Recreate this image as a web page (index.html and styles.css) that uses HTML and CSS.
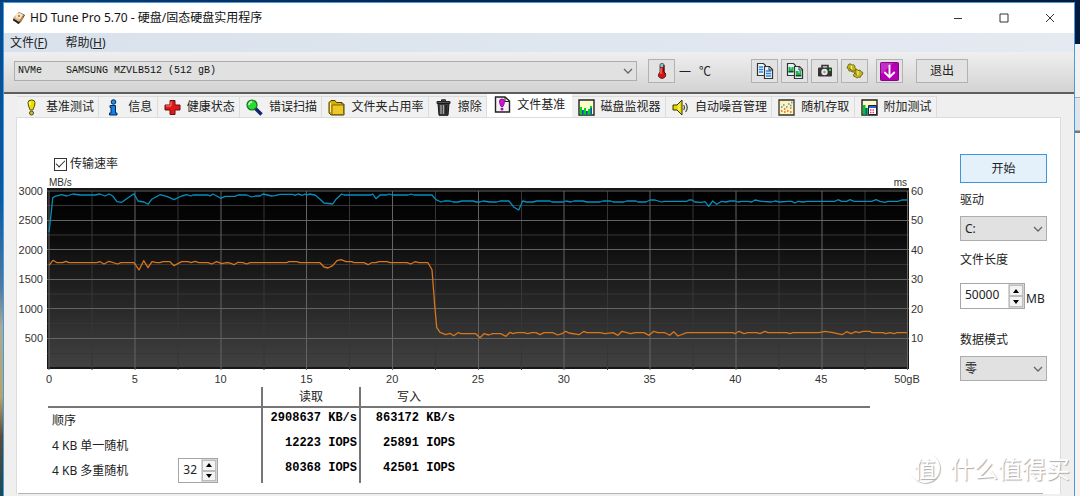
FILE: index.html
```html
<!DOCTYPE html>
<html lang="zh-CN">
<head>
<meta charset="utf-8">
<title>HD Tune Pro 5.70</title>
<link rel="stylesheet" href="styles.css">
</head>
<body>
<div class="desktop">
<div class="window">
  <header class="titlebar">
    <svg class="app-icon" viewBox="0 0 14 14" aria-hidden="true"><path d="M1 8 7 1l6 3-5 8-2 1z" fill="#3c342d"/><path d="M1 7 7 1l5 3-5 7z" fill="#d8b98a"/><ellipse cx="7" cy="5" rx="3.4" ry="2.8" fill="#f6e6c6"/><circle cx="7" cy="5" r="1" fill="#a06a2c"/><path d="m1 8 6 3v2L1 9.500z" fill="#222"/><path d="m10 5 2 1-3 5-1-1z" fill="#b97e38"/></svg>
    <h1 class="title">HD Tune Pro 5.70 - 硬盘/固态硬盘实用程序</h1>
    <div class="caption-buttons">
      <button class="caption-button" aria-label="最小化"><svg viewBox="0 0 10 10"><path d="M1 5.500h8"/></svg></button>
      <button class="caption-button" aria-label="最大化"><svg viewBox="0 0 10 10"><path d="M1 1h8v8H1z"/></svg></button>
      <button class="caption-button" aria-label="关闭"><svg viewBox="0 0 10 10"><path d="m1 1 8 8M9 1 1 9"/></svg></button>
    </div>
  </header>
  <nav class="menubar">
    <button class="menu">文件(<u>F</u>)</button>
    <button class="menu">帮助(<u>H</u>)</button>
  </nav>
  <div class="toolbar">
    <div class="combo combo-drive">
      <select class="combo-field mono" aria-label="硬盘"><option>NVMe&nbsp;&nbsp;&nbsp; SAMSUNG MZVLB512 (512 gB)</option></select>
      <svg class="chevron" viewBox="0 0 10 6" aria-hidden="true"><path d="m1 1 4 4 4-4"/></svg>
    </div>
    <div class="temperature">
      <button class="tool" aria-label="温度"><svg viewBox="0 0 18 18"><path d="M7 2.500Q9 0 11 2.500V10q2.500 2 1.500 4.500Q9 18.500 5.500 14.500 5 12 7 10z" fill="#e01010" stroke="#222" stroke-width=".8"/><path d="M7.400 2.500Q9 .6 10.600 2.500V5H7.400z" fill="#5fd4dc"/><path d="M8 6v6" stroke="#ff9a8a"/><path d="M11 3v7l2 2" stroke="#550000" fill="none"/></svg></button>
      <span class="dash">—</span><span class="degree">℃</span>
    </div>
    <div class="tools">
      <button class="tool" aria-label="复制文本"><svg viewBox="0 0 18 18"><g fill="#eef6ff" stroke="#333" stroke-width="1.200"><path d="M1.500 1.500h6l2 2v10h-8z"/><path d="M8.500 4.500h5l3 3v9h-8z"/></g><path d="M3 5h4M3 7.500h4M3 10h4M10 9h5M10 11.500h5M10 14h5" stroke="#2a86d8" stroke-width="1.300"/><path d="M13 4.500V8h3.500" fill="none" stroke="#333"/></svg></button>
      <button class="tool" aria-label="复制图像"><svg viewBox="0 0 18 18"><g fill="#e6f2f2" stroke="#333" stroke-width="1.200"><path d="M1.500 1.500h6l2 2v10h-8z"/><path d="M8.500 4.500h5l3 3v9h-8z"/></g><path d="M2.500 5h5v5h-5zM9.800 9h5.500v5H9.800z" fill="#20b830"/><path d="M2.500 9h5v1.500h-5zM9.800 13h5.500v1.500H9.800z" fill="#153c4a"/><path d="M4 5h2v2H4zM12 9h2v2h-2z" fill="#57c9e4"/><path d="M13 4.500V8h3.500" fill="none" stroke="#333"/></svg></button>
      <button class="tool" aria-label="截图"><svg viewBox="0 0 18 18"><path d="M6 6V3.500h6V6" fill="none" stroke="#333" stroke-width="1.600"/><rect x="2" y="5.500" width="14" height="9" rx="1" fill="#343434"/><circle cx="8.500" cy="10" r="3.200" fill="#e6e6e6"/><circle cx="8.500" cy="10" r="1.200" fill="#999"/><rect x="13" y="7" width="2" height="2" fill="#29dc35"/></svg></button>
      <button class="tool" aria-label="选项"><svg viewBox="0 0 18 18"><g fill="#c4b51c" stroke="#6d640c" stroke-width=".9"><path d="M3 2h2l.6 1.500 1.800-1L9 4.200 8.500 5.500 10 6.500l-.5 2.300H7.800L6.500 10 4.800 9H3L2.500 7.200 1 6l.8-2z"/><path d="m9 8 2-.7 1 1.200 2-.5 1 1.600 1.800.8-.3 2.200-1.500.8-.5 1.800h-2L11 16l-1.800-1.200-1.500-.6v-2L9 11z"/></g><path d="M5.500 3.500v4M12 9v4" stroke="#eee9a0" stroke-width="1.300"/><path d="m3 6 8 7" stroke="#786e10"/></svg></button>
      <button class="tool tool-save" aria-label="保存"><svg viewBox="0 0 20 20"><rect x=".5" y=".5" width="19" height="19" rx="1" fill="#b600b6" stroke="#7b007b"/><path d="M1 1h13L1 13z" fill="#d05bd6" opacity=".5"/><path d="M10 3v12M4.500 10.500 10 16l5.500-5.500" fill="none" stroke="#fff" stroke-width="2"/></svg></button>
      <button class="tool tool-exit">退出</button>
    </div>
  </div>
  <div class="tabs" role="tablist">
    <button class="tab" role="tab"><svg viewBox="0 0 17 17"><path d="M5 3.500Q5 1 8.500 1T12 3.500Q12 7 9.800 11H7.200Q5 7 5 3.500z" fill="#e8e000" stroke="#555200"/><circle cx="8.500" cy="14" r="2" fill="#d4c800" stroke="#444"/><path d="M7 3v3" stroke="#fffcb0" stroke-width="1.500"/></svg>基准测试</button>
    <button class="tab" role="tab"><svg viewBox="0 0 17 17"><circle cx="8.500" cy="3" r="2.300" fill="#1e8ef0" stroke="#052858"/><path d="M5 6.500h5.500V14H12v2H4.500v-2H6V8.500H5z" fill="#1083e8" stroke="#052858"/></svg>信息</button>
    <button class="tab" role="tab"><svg viewBox="0 0 17 17"><path d="M6 1.500h5V6h5v5h-5v4.500H6V11H1V6h5z" fill="#e01818" stroke="#681010"/><path d="M7 2.500V7H2" fill="none" stroke="#ff8c7c"/></svg>健康状态</button>
    <button class="tab" role="tab"><svg viewBox="0 0 17 17"><path d="m9 9 6.500 6.500" stroke="#16246e" stroke-width="3.400"/><circle cx="6" cy="6" r="5" fill="#28dc32" stroke="#14721c" stroke-width="1.200"/><path d="M3 6q0-3 3-3" fill="none" stroke="#d6ffda" stroke-width="1.500"/></svg>错误扫描</button>
    <button class="tab" role="tab"><svg viewBox="0 0 17 17"><path d="M1 3.500 3 1.500h4l1.500 2H14V5h2v11H3l-2-2z" fill="#d8b100" stroke="#4a3c00"/><path d="M4 6h11.500v9.500H4z" fill="#ebc928" stroke="#80690a"/><path d="M2.500 4v9" stroke="#fff0a0"/></svg>文件夹占用率</button>
    <button class="tab" role="tab"><svg viewBox="0 0 17 17"><path d="M6.500 2V.8h4V2M2 2.500h13v2H2z" fill="#555" stroke="#222"/><path d="M3 4.500h11l-1 11.800H4z" fill="#3a3a3a" stroke="#181818"/><path d="M6 6v9M8.500 6v9" stroke="#aaa" stroke-width="1.300"/><path d="M11 6v9" stroke="#111"/></svg>擦除</button>
    <button class="tab tab-active" role="tab" aria-selected="true"><svg viewBox="0 0 17 17"><path d="M1.500 1H11l4.500 4v11h-14z" fill="#f4f0f6" stroke="#222" stroke-width="1.400"/><path d="M11 1v4.500h4" fill="none" stroke="#222"/><path d="M5.500 5Q5.500 3 8 3t2.500 2Q10.500 8 9 10.500H7Q5.500 8 5.500 5z" fill="#d810d8" stroke="#6f086f" stroke-width=".8"/><circle cx="8" cy="13" r="1.500" fill="#b408b4"/></svg>文件基准</button>
    <button class="tab" role="tab"><svg viewBox="0 0 17 17"><path d="M1 1h15v15H1z" fill="#fbfbcb" stroke="#222" stroke-width="1.400"/><path d="M2 8h2v3h2V9h2v3h2v-2h2V7h2v8.500H2z" fill="#00d414"/><path d="M4 11h1.500v4.500H4zM8 12h1.500v3.500H8zM12.500 9H14v6.500h-1.500z" fill="#1741e0"/></svg>磁盘监视器</button>
    <button class="tab" role="tab"><svg viewBox="0 0 17 17"><path d="M1 6h4l5-5v15l-5-5H1z" fill="#e8da00" stroke="#373300"/><path d="M7 5v7" stroke="#fffa9b"/><path d="M11.500 6q2 2.500 0 5M13.500 4q3.500 4.500 0 9" fill="none" stroke="#444" stroke-width="1.200"/></svg>自动噪音管理</button>
    <button class="tab" role="tab"><svg viewBox="0 0 17 17"><path d="M1 1h15v15H1z" fill="#fbf4b4" stroke="#333" stroke-width="1.300"/><path d="M3 12h1.500M6 10h1.500M9 12h1.500M12 9h1.500M6 13h1.500M12 13h1.500" stroke="#e35a35" stroke-width="1.500"/><path d="M3 8h1.500M5 6h1.500M8 8h1.500M10 5h1.500M13 3.500h1.500M12 6.500h1.500" stroke="#6682df" stroke-width="1.500"/></svg>随机存取</button>
    <button class="tab" role="tab"><svg viewBox="0 0 17 17"><path d="M1 1h15v15H1z" fill="#fbfbcb" stroke="#222" stroke-width="1.400"/><path d="M2 6h2.500v3H7v6.500H2z" fill="#00c814"/><path d="M4.500 9H6v6.500H4.500z" fill="#1741e0"/><path d="M7.500 6.500h8v9h-8z" fill="#fff" stroke="#222"/><path d="M8 7h7v2H8z" fill="#2463d8"/><path d="M9 11h1.500M11.500 11H13M9 13.500h1.500M11.500 13.500H13" stroke="#e03c70" stroke-width="1.400"/></svg>附加测试</button>
  </div>
  <main class="panel">
    <div class="columns">
      <section class="results">
        <label class="check"><input class="check-box" type="checkbox" checked>传输速率</label>
        <div class="chart">
          <div class="units"><span>MB/s</span><span>ms</span></div>
          <div class="scale scale-left"><span>3000</span><span>2500</span><span>2000</span><span>1500</span><span>1000</span><span>500</span></div>
          <svg class="plot" viewBox="0 0 862 182" preserveAspectRatio="none" role="img" aria-label="传输速率">
            <defs><linearGradient id="shade" x1="0" y1="0" x2="0" y2="1"><stop offset="0" stop-color="#000"/><stop offset=".2" stop-color="#060606"/><stop offset="1" stop-color="#424242"/></linearGradient></defs>
            <rect width="862" height="181" fill="url(#shade)"/>
            <path class="frame" d="M0 1h862M0 180h862M.5 0v181M861.500 0v181"/>
            <path class="grid-minor" d="M0 17.500h862M0 47h862M0 76.500h862M0 106h862M0 135.500h862M0 165.500h862M45 3v179M131 3v179M217 3v179M302.500 3v179M388.500 3v179M474.500 3v179M560.500 3v179M646 3v179M732 3v179M818 3v179"/>
            <path class="grid-major" d="M0 3h862M0 32.500h862M0 61.500h862M0 91.500h862M0 120.500h862M0 150.500h862M2 3v179M88 3v179M174 3v179M259.500 3v179M345.500 3v179M431.500 3v179M517 3v179M603 3v179M689 3v179M775 3v179M860.500 3v179"/>
            <polyline class="series read" points="2,44 3.700,29 4.700,20 5.700,10 8,8.300 14.700,6.700 19.700,8 26,6 33,7 48,7 53,6 58,8 62,6 65.700,8 70,13.700 74.700,14.300 87,5.700 91,13 97,14 101,16.300 104.700,11.300 113,6.700 119.700,8.300 127,11.700 134.700,8 139.700,6.700 143.700,8 146,7 161,7 163,8 166,6 169.700,8 173.700,10.300 178,8.300 188,8.300 191,7 199.700,7 204.700,9 208,8 213,8 216,6 224.700,8 228,7.700 233,6.300 246,6.300 248,7.300 251,6 255.700,7.300 258,6 260,7.300 262,6 268,7 272,10.300 277,15 285.700,16 289,11.300 294.700,6 297,7 324,7 325.700,6 329,10.700 333,7 339.700,7 342,6 345,7 361,7 364,6 367,7 385,7 389,11.700 394,14 397,13 403,13 406,14 411,14 414.700,13 426,13 429.700,14 433,14 436,13 443,14 449.700,14 453,13 462,13 467,19.300 471.700,22 475.700,13 479.700,14 486,14 489.700,13 503,13 505,14 516,14 519,13 523.700,14 527,13 536,13 539.700,14 553,14 556,13 563.700,13 566,14 577,14 579.700,13 589,13 591,14 599,14 603,12 608,12 614.700,14 617,13.300 640,13.300 642,12 645,12 648,14 654.700,14.300 658,13.700 661.700,18.300 665.700,13 669.700,16.300 674.700,13.300 679,14 683,13 688,13 691,14 694.700,13.300 701,13.300 704.700,14 708,12 714.700,13.300 724.700,14 728,13 733,14 739.700,13.300 744.700,13.300 748,15 751,13.300 756,14 759.700,13.300 788,13.300 791,11.700 794.700,13.300 799.700,13.300 803,11.700 807,13.300 824.700,13.300 829,11.700 833,13.300 838,14.300 841,13.300 851,13.300 854.700,12 860,12"/>
            <polyline class="series write" points="2,77.300 6,72.300 10,74.700 15.700,74.700 19,73.300 22,74.700 49.700,74.700 53,73.700 57,76 62,73.300 70.700,76 73.700,74.700 87,74.700 92,82 96.700,72.700 101,79.700 105,73.700 109.700,74.700 113,74.700 116,73.700 123,73.700 127,77.700 134.700,73.700 141,73.700 144,74.700 148,73.300 152,74.700 161,74.700 164.700,76 169.700,73.700 174.700,75.700 179.700,74.700 183,75 187,76.700 191,74.300 196,74.700 199.700,76 203,74.700 239.700,74.700 242,73.700 249.700,73.700 253,74.700 273,74.700 277,79 281,80 285.700,77.700 290,72.700 294,71.700 299,73.700 304.700,73.700 307,74.700 317,74.700 321,76.700 324.700,74.700 329,74.700 332,73.700 340,73.700 343,74.700 360,74.700 363.700,76 368,73.700 372,74.700 381,74.700 385,81.700 387.700,117 389.700,139.300 393,144.300 398.700,146.700 403,145.300 406.700,147.700 411,144.700 414,145.700 428.700,145.700 433,149.700 437,145.700 441.700,147 445.700,145.700 453.700,145.700 459,148.300 463,144.300 466,145.700 469.700,144.700 477,144.700 480.700,145.700 484.700,144.700 489,144.700 493,146.700 497,144.700 505.700,144.700 510.700,147 515,145.700 518.700,143.300 522,145 532,146.700 537,143.300 539.700,144.700 553,144.700 558,145.700 566,144.700 571,147.300 575,143.300 579.700,144.700 583.700,145.700 588,144.700 597,144.700 602,147.300 606.700,143.300 611,144.700 618,144.700 622.700,147.300 626.700,143.700 631,148 639.700,144.700 685.700,144.700 688,145.700 692,143.300 697,145.700 701,144.700 709.700,144.700 713,145.700 718,143.300 721,144.700 739.700,144.700 743,145.700 746,144.700 772,144.700 778,143.300 786,144.700 795,146.700 799.700,143.700 804,145.700 808.700,143.700 812,144.700 816,143.300 823,143.300 825,144.700 836,144.700 838.700,145.700 843,144.700 847,145.700 850,144.700 860,144.700"/>
          </svg>
          <div class="scale scale-right"><span>60</span><span>50</span><span>40</span><span>30</span><span>20</span><span>10</span></div>
          <div class="scale-bottom"><span>0</span><span>5</span><span>10</span><span>15</span><span>20</span><span>25</span><span>30</span><span>35</span><span>40</span><span>45</span><span>50gB</span></div>
        </div>
        <table class="summary">
          <colgroup><col class="col-name"><col class="col-value"><col class="col-value"><col></colgroup>
          <thead><tr><td></td><th scope="col">读取</th><th scope="col">写入</th><td></td></tr></thead>
          <tbody>
            <tr><th scope="row">顺序</th><td>2908637 KB/s</td><td>863172 KB/s</td><td></td></tr>
            <tr><th scope="row">4 KB 单一随机</th><td>12223 IOPS</td><td>25891 IOPS</td><td></td></tr>
            <tr><th scope="row"><div class="queue"><label for="queue">4 KB 多重随机</label>
              <span class="spinner spinner-queue"><input id="queue" class="spinner-input" type="text" value="32"><span class="steps"><button class="step" aria-label="增加"><svg viewBox="0 0 6 4"><path d="M0 4 3 0l3 4z"/></svg></button><button class="step" aria-label="减少"><svg viewBox="0 0 6 4"><path d="m0 0 3 4 3-4z"/></svg></button></span></span></div></th><td>80368 IOPS</td><td>42501 IOPS</td><td></td></tr>
          </tbody>
        </table>
      </section>
      <aside class="options">
        <button class="start">开始</button>
        <div class="field">
          <label for="drive">驱动</label>
          <div class="combo"><select id="drive" class="combo-field"><option>C:</option></select><svg class="chevron" viewBox="0 0 10 6" aria-hidden="true"><path d="m1 1 4 4 4-4"/></svg></div>
        </div>
        <div class="field field-length">
          <label for="length">文件长度</label>
          <div class="length"><span class="spinner spinner-length"><input id="length" class="spinner-input" type="text" value="50000"><span class="steps"><button class="step" aria-label="增加"><svg viewBox="0 0 6 4"><path d="M0 4 3 0l3 4z"/></svg></button><button class="step" aria-label="减少"><svg viewBox="0 0 6 4"><path d="m0 0 3 4 3-4z"/></svg></button></span></span><span class="length-unit">MB</span></div>
        </div>
        <div class="field field-mode">
          <label for="mode">数据模式</label>
          <div class="combo"><select id="mode" class="combo-field"><option>零</option></select><svg class="chevron" viewBox="0 0 10 6" aria-hidden="true"><path d="m1 1 4 4 4-4"/></svg></div>
        </div>
      </aside>
    </div>
    <hr class="divider">
  </main>
</div>
<div class="behind"></div>
<div class="watermark"><span class="watermark-badge">值</span><span>什么值得买</span></div>
</div>
</body>
</html>
```
FILE: styles.css
```css
* { box-sizing: border-box; }

body {
  margin: 0;
  font: 12px/16px "Noto Sans", "Noto Sans CJK SC", sans-serif;
  color: #222;
}

button, input, select { margin: 0; font: inherit; color: inherit; }
button { padding: 0; border: 0; background: none; }
svg { display: block; flex: none; }

.desktop {
  position: relative;
  display: flex;
  height: 100vh;
  overflow: hidden;
  padding: 2px 0 0 3px;
  background: linear-gradient(90deg, #07417c, #032653 40%, #021c40) top / 100% 2px no-repeat,
    linear-gradient(#07498b, #0a5aa5 40%, #4f7ba0 58%, #a9aa9a 66%, #b6a46b 80%, #5b4b3b 88%, #174b5b);
}

.window {
  flex: 1;
  min-width: 0;
  border: 1px solid #4b9adb;
  border-bottom: 0;
  background: #efefef;
}

.behind {
  width: 5px;
  background: linear-gradient(#021c40 42px, #f3f1f1 42px, #f3f1f1 95px, #aaa 95px, #aaa 96px, #e4e4e8 96px, #dbe4f0 128px, #777 129px, #777 131px, #f7f3f1 131px);
}

.titlebar { display: flex; align-items: center; height: 30px; padding-left: 8px; background: #fff; }
.app-icon { width: 14px; height: 14px; }
.title { flex: 1; margin: 0 0 0 4px; font-size: 12px; font-weight: 400; color: #111; }
.caption-buttons { display: flex; }
.caption-button { display: grid; place-items: center; width: 46px; height: 30px; padding-right: 2px; }
.caption-button svg { width: 10px; height: 10px; fill: none; stroke: #333; }

.menubar { display: flex; gap: 18px; height: 19px; padding-left: 6px; background: linear-gradient(90deg, #d9e1ec, #e3eaf2); }
.menu { line-height: 20px; }

.toolbar {
  display: flex;
  align-items: center;
  height: 42px;
  padding: 0 106px 2px 10px;
  border-bottom: 2px solid #5e5e5e;
  background: linear-gradient(#efefef, #d3d3d3);
}

.combo { display: grid; }
.combo > * { grid-area: 1 / 1; }
.combo-field {
  appearance: none;
  width: 100%;
  height: 25px;
  padding: 0 4px;
  border: 1px solid #adadad;
  border-radius: 0;
  background: #e1e1e1;
}
.combo-drive { flex: 1; }
.combo-drive .combo-field { height: 20px; padding: 0 3px; }
.mono { font-family: "Liberation Mono", monospace; font-size: 10px; color: #111; }
.chevron { align-self: center; justify-self: end; width: 10px; height: 6px; margin-right: 4px; fill: none; stroke: #666; stroke-width: 1.3; pointer-events: none; }

.temperature { display: flex; align-items: center; width: 103px; margin-left: 11px; }
.dash { margin-left: 4px; }
.degree { margin-left: 8px; font-family: "Noto Sans CJK SC", sans-serif; }
.tools { display: flex; gap: 3px; }
.tool { display: grid; place-items: center; width: 27px; height: 24px; border: 1px solid #b2b2b2; background: #e2e2e2; }
.tool svg { width: 18px; height: 18px; }
.tool-save { margin-left: 5px; }
.tool-save svg { width: 19px; height: 19px; }
.tool-exit { width: 52px; margin-left: 10px; }

.tabs { display: flex; align-items: flex-end; max-width: 933px; height: 23px; padding-left: 13px; }
.tab {
  flex: 1 0 auto;
  display: flex;
  align-items: center;
  gap: 6px;
  height: 21px;
  padding: 0 4px 0 6px;
  border: solid #dcdcdc;
  border-width: 1px 1px 0 0;
  background: #f1f1f1;
  white-space: nowrap;
}
.tab svg { width: 17px; height: 17px; }
.tab-active { height: 23px; padding: 0 5px 3px 7px; border-color: #fff; background: #fff; }

.panel { margin: 0 13px 0 12px; border: 1px solid #dcdcdc; border-bottom: 0; background: #fff; }
.columns { display: flex; gap: 20px; padding: 36px 13px 0 0; }
.results { flex: 1; min-width: 0; padding-top: 2px; }

.check { display: flex; align-items: center; gap: 3px; width: max-content; margin: 0 0 6px 37px; }
.check-box {
  appearance: none;
  display: grid;
  place-items: center;
  width: 13px;
  height: 13px;
  margin: 0;
  border: 1px solid #333;
}
.check-box:checked::before { content: ""; width: 8px; height: 4px; margin-bottom: 3px; border: solid #333; border-width: 0 0 1px 1px; transform: rotate(-45deg); }

.chart { display: grid; grid-template-columns: 30px 1fr 31px; font: 11px/12px "Liberation Sans", sans-serif; color: #333; }
.units { grid-column: 2; display: flex; justify-content: space-between; padding: 0 2px; font-size: 10px; line-height: 10px; }
.scale { grid-row: 2; display: flex; flex-direction: column; justify-content: space-between; padding: 3px 2px 32px; }
.scale span { display: flex; align-items: center; height: 0; }
.scale-left { grid-column: 1; align-items: flex-end; padding-right: 4px; }
.scale-right { grid-column: 3; }
.plot { grid-area: 2 / 2; width: 100%; height: 182px; }
.frame, .grid-minor, .grid-major, .series { fill: none; vector-effect: non-scaling-stroke; }
.frame { stroke: #161616; stroke-width: 2; }
.grid-minor { stroke: #363636; }
.grid-major { stroke: #646464; }
.series { stroke-width: 1.3; stroke-linejoin: round; }
.read { stroke: #078fbd; }
.write { stroke: #d9761b; }
.scale-bottom { grid-column: 2; display: flex; justify-content: space-between; padding: 3px 2px 2px; }
.scale-bottom span { display: flex; justify-content: center; width: 0; }

.summary { width: calc(100% - 101px); margin-left: 31px; border-collapse: separate; border-spacing: 0; table-layout: fixed; }
.summary th, .summary td { padding: 0; font-weight: 400; }
.col-name { width: 213px; }
.col-value { width: 98px; }
.summary thead > tr > * { height: 21px; border-bottom: 2px solid #767676; line-height: 19px; }
.summary tr > :nth-child(2), .summary tr > :nth-child(3) { border-left: 2px solid #767676; }
.summary tbody th { height: 25px; padding-left: 4px; text-align: left; }
.summary tbody td { padding-right: 2px; font: bold 12px/21px "Liberation Mono", monospace; color: #000; text-align: right; vertical-align: top; white-space: nowrap; }
.queue { display: flex; align-items: center; gap: 50px; }

.spinner { display: flex; height: 26px; border: 1px solid #a6a6a6; background: #fff; }
.spinner-input { flex: 1; min-width: 0; padding: 0 0 2px 4px; border: 0; background: none; }
.spinner-queue { width: 40px; height: 25px; }
.spinner-length { width: 65px; }
.steps { display: grid; width: 16px; padding: 1px; background: #d5d5d5; }
.step { display: grid; place-items: center; border: 1px solid #bcbcbc; background: #f3f3f3; }
.step svg { width: 6px; height: 4px; }

.options { display: flex; flex-direction: column; width: 87px; }
.start { height: 29px; border: 1px solid #3c96dd; background: #e4f1fb; }
.field { display: flex; flex-direction: column; gap: 8px; margin-top: 9px; }
.field-length { gap: 15px; margin-top: 11px; }
.field-mode { margin-top: 23px; }
.length { display: flex; align-items: center; gap: 1px; }
.length-unit { padding-top: 6px; }

.divider { height: 1px; margin: 10px 17px 8px 1px; border: 0; background: #b5b5b5; }

.watermark {
  position: absolute;
  right: 10px;
  bottom: 11px;
  display: flex;
  align-items: center;
  gap: 10px;
  font: 24px/34px "Noto Sans CJK SC", sans-serif;
  color: #fff;
  text-shadow: 1px 1px 1px #aaa;
}
.watermark-badge { width: 30px; height: 30px; border-radius: 50%; font-size: 22px; line-height: 28px; text-align: center; box-shadow: 1px 1px 1px #bbb; }
```
